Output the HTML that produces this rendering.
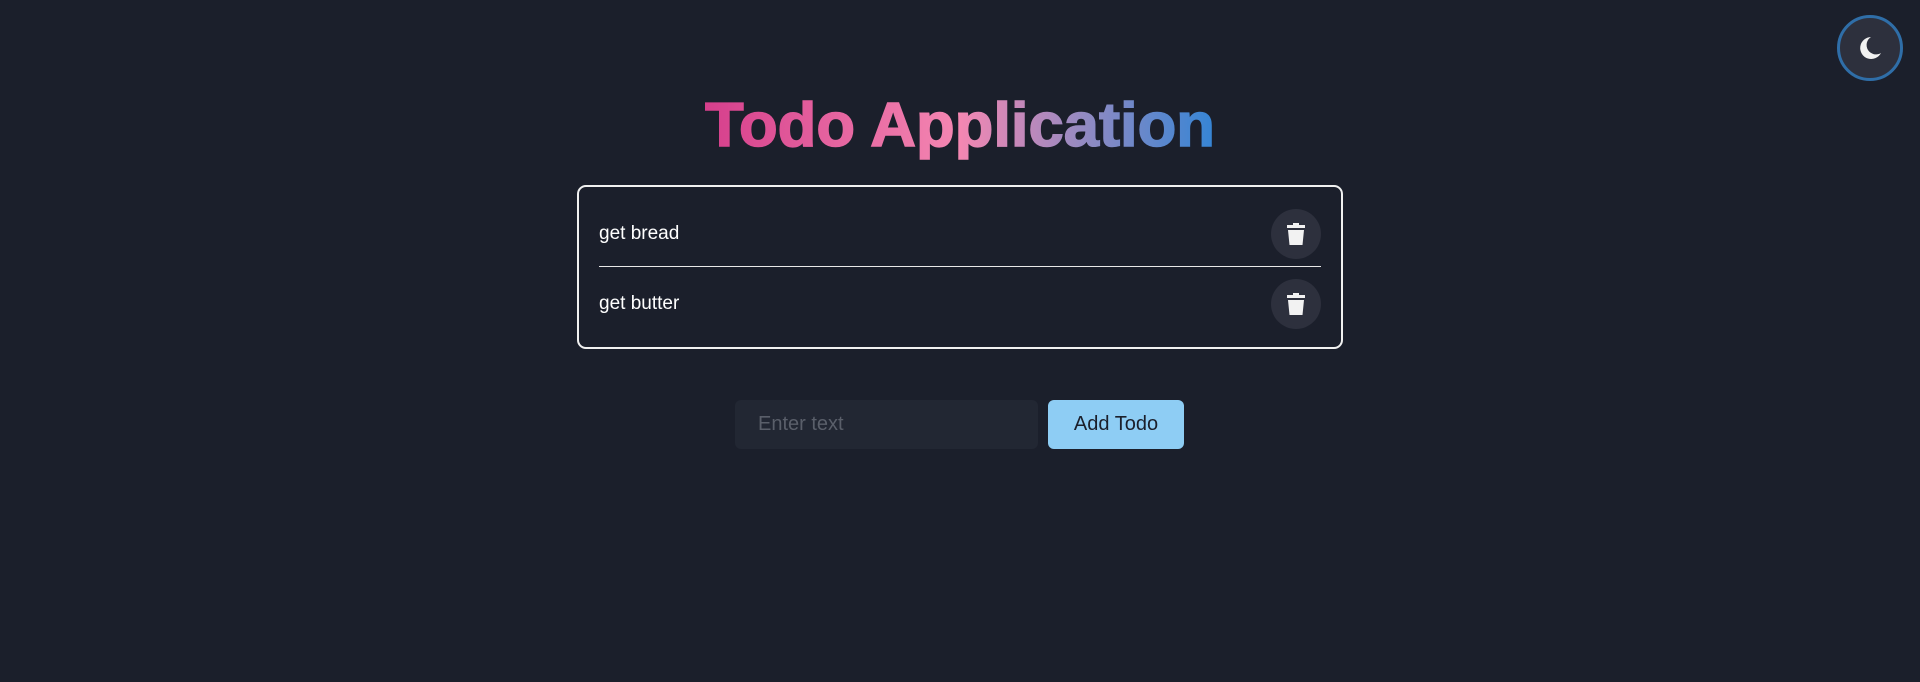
<!DOCTYPE html>
<html><head><meta charset="utf-8"><style>
html,body{margin:0;padding:0;width:1920px;height:682px;background:#1b1f2b;overflow:hidden;font-family:"Liberation Sans",sans-serif;}
.moon{position:absolute;left:1837px;top:15px;width:60px;height:60px;border:3px solid #2f6ea8;border-radius:50%;background:#2d303d;}
.title{position:absolute;left:705px;top:60px;}
.box{position:absolute;left:577px;top:185px;width:762px;height:160px;border:2px solid #f0f0f0;border-radius:9px;}
.row{position:absolute;left:20px;right:20px;height:60px;color:#fff;font-size:19px;}
.row span{position:absolute;left:0;top:50%;transform:translateY(-50%);}
.del{position:absolute;right:0;top:5px;width:50px;height:50px;border-radius:50%;background:#2d303d;}
.del svg{position:absolute;left:16px;top:14px;}
.div{position:absolute;left:20px;right:20px;top:79px;height:1px;background:#e8e8e8;}
.inp{position:absolute;left:735px;top:400px;width:303px;height:49px;background:#222733;border-radius:6px;color:#5a5f6a;font-size:20px;}
.inp span{position:absolute;left:23px;top:13px;}
.btn{position:absolute;left:1048px;top:400px;width:136px;height:49px;background:#8ecdf4;border-radius:6px;color:#1b1f2b;font-size:20px;text-align:center;line-height:49px;}
</style></head><body>
<div class="moon"><svg width="60" height="60" viewBox="0 0 60 60"><path d="M31 19a11 11 0 1 0 10 16a9 9 0 0 1-10-16z" fill="#f2f2f2"/></svg></div>
<svg class="title" width="520" height="110" viewBox="0 0 520 110">
<defs><linearGradient id="g" x1="0" x2="1" y1="0" y2="0">
<stop offset="0" stop-color="#d63f8c"/><stop offset="0.5" stop-color="#f487b2"/><stop offset="0.75" stop-color="#908ac2"/><stop offset="1" stop-color="#3585d5"/></linearGradient></defs>
<text x="0" y="86" font-family="Liberation Sans, sans-serif" font-weight="bold" font-size="62" textLength="510" lengthAdjust="spacingAndGlyphs" fill="url(#g)" stroke="url(#g)" stroke-width="1.5">Todo Application</text>
</svg>
<div class="box">
<div class="row" style="top:17px"><span>get bread</span><div class="del"><svg width="18" height="22" viewBox="0 0 18 22"><path d="M6 0h6v2h6v3H0V2h6z M1 7h16l-1.5 15h-13z" fill="#f2f2f2"/></svg></div></div>
<div class="div"></div>
<div class="row" style="top:87px"><span>get butter</span><div class="del"><svg width="18" height="22" viewBox="0 0 18 22"><path d="M6 0h6v2h6v3H0V2h6z M1 7h16l-1.5 15h-13z" fill="#f2f2f2"/></svg></div></div>
</div>
<div class="inp"><span>Enter text</span></div>
<div class="btn">Add Todo</div>
</body></html>
